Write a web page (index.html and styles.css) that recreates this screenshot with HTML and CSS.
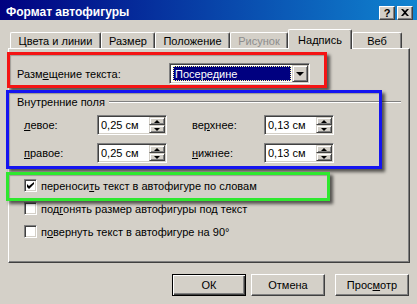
FILE: index.html
```html
<!DOCTYPE html>
<html lang="ru">
<head>
  <meta charset="UTF-8">
  <title>Формат автофигуры</title>
  <link rel="stylesheet" href="styles.css">
</head>
<body>
<div class="window">
  <div class="titlebar">
    <span class="title">Формат автофигуры</span>
    <div class="caption-btns">
      <span class="cbtn">?</span>
      <span class="cbtn">
        <svg width="8" height="7" viewBox="0 0 8 7"><path d="M0 0h2l2 2 2-2h2L5 3.5 8 7H6L4 5 2 7H0l3-3.5z" fill="#000"/></svg>
      </span>
    </div>
  </div>

  <div class="tabs">
    <div class="tab w1">Цвета и линии</div>
    <div class="tab w2">Размер</div>
    <div class="tab w3">Положение</div>
    <div class="tab w4 disabled">Рисунок</div>
    <div class="tab w5 active">Надпись</div>
    <div class="tab w6">Веб</div>
  </div>

  <div class="panel">
    <div class="place-row">
      <span class="place-label">Разм<u>е</u>щение текста:</span>
      <div class="combo">
        <div class="combo-value"><span>Посередине</span></div>
        <div class="combo-btn"><i class="arrow-down big"></i></div>
      </div>
    </div>

    <div class="group-head">
      <span>Внутренние поля</span>
      <div class="group-line"></div>
    </div>

    <div class="fields">
      <span class="f-label"><u>л</u>евое:</span>
      <div class="spin"><span class="spin-val">0,25 см</span><div class="spin-btns"><b><i class="arrow-up"></i></b><b><i class="arrow-down"></i></b></div></div>
      <span></span>
      <span class="f-label">ве<u>р</u>хнее:</span>
      <div class="spin"><span class="spin-val">0,13 см</span><div class="spin-btns"><b><i class="arrow-up"></i></b><b><i class="arrow-down"></i></b></div></div>

      <span class="f-label"><u>п</u>равое:</span>
      <div class="spin"><span class="spin-val">0,25 см</span><div class="spin-btns"><b><i class="arrow-up"></i></b><b><i class="arrow-down"></i></b></div></div>
      <span></span>
      <span class="f-label"><u>н</u>ижнее:</span>
      <div class="spin"><span class="spin-val">0,13 см</span><div class="spin-btns"><b><i class="arrow-up"></i></b><b><i class="arrow-down"></i></b></div></div>
    </div>

    <div class="checks">
      <div class="check-row">
        <span class="check-box">
          <svg width="7" height="7" viewBox="0 0 7 7"><path d="M0 2v3l2 2 5-5V-0L2 4z" fill="#000"/></svg>
        </span>
        <span>переноси<u>т</u>ь текст в автофигуре по словам</span>
      </div>
      <div class="check-row">
        <span class="check-box"></span>
        <span>под<u>г</u>онять размер автофигуры под текст</span>
      </div>
      <div class="check-row">
        <span class="check-box"></span>
        <span>п<u>о</u>вернуть текст в автофигуре на 90°</span>
      </div>
    </div>
  </div>

  <div class="buttons">
    <div class="btn default">ОК</div>
    <div class="btn cancel">Отмена</div>
    <div class="btn">Прос<u>м</u>отр</div>
  </div>

  <!-- цветные рамки поверх диалога -->
  <div class="mark red"></div>
  <div class="mark blue"></div>
  <div class="mark green"></div>
</div>
</body>
</html>
```

FILE: styles.css
```css
body {
  margin: 0;
  background: #d4d0c8;
}

.window {
  position: relative;
  width: 417px;
  height: 304px;
  background: #d4d0c8;
  color: #000;
  font-family: "Liberation Sans", Arial, sans-serif;
  font-size: 11px;
  overflow: hidden;
}

u {
  text-decoration: underline;
  text-underline-offset: 1px;
}

/* заголовок окна */
.titlebar {
  height: 20px;
  display: flex;
  align-items: center;
  justify-content: space-between;
  padding: 0 4px 0 6px;
  background: linear-gradient(to right, #000080, #1084d0);
  color: #fff;
}

.title {
  font-weight: bold;
  font-size: 12px;
  margin-top: 3px;
}

.caption-btns {
  display: flex;
  gap: 2px;
  margin-top: 5px;
}

.cbtn {
  width: 16px;
  height: 14px;
  box-sizing: border-box;
  display: flex;
  justify-content: center;
  align-items: center;
  background: #d4d0c8;
  color: #000;
  font-weight: bold;
  font-size: 11px;
  border-top: 1px solid #fff;
  border-left: 1px solid #fff;
  border-right: 1px solid #404040;
  border-bottom: 1px solid #404040;
  box-shadow: inset -1px -1px #808080;
}

/* вкладки */
.tabs {
  position: relative;
  z-index: 2;
  display: flex;
  align-items: flex-end;
  height: 28px;
  padding-left: 10px;
}

.tab {
  height: 16px;
  box-sizing: border-box;
  padding-top: 2px;
  text-align: center;
  line-height: 13px;
  border-top: 1px solid #fff;
  border-left: 1px solid #fff;
  border-right: 1px solid #404040;
  border-radius: 2px 2px 0 0;
  box-shadow: inset -1px 0 #808080;
  background: #d4d0c8;
}

.w1 { width: 91px; }
.w2 { width: 54px; }
.w3 { width: 75px; }
.w4 { width: 58px; }
.w5 { width: 64px; }
.w6 { width: 50px; }

.tab.disabled {
  color: #8d8d8d;
}

.tab.active {
  height: 20px;
  margin-bottom: -1px;
  padding-top: 4px;
}

/* панель */
.panel {
  margin-left: 8px;
  width: 402px;
  height: 215px;
  box-sizing: border-box;
  padding: 14px 0 0 8px;
  border-top: 1px solid #fff;
  border-left: 1px solid #fff;
  border-right: 1px solid #404040;
  border-bottom: 1px solid #404040;
  box-shadow: inset -1px -1px #808080;
}

.place-row {
  display: flex;
  align-items: center;
  height: 21px;
}

.place-label {
  width: 152px;
}

.combo {
  width: 141px;
  height: 21px;
  box-sizing: border-box;
  display: flex;
  align-items: center;
  padding: 1px;
  background: #fff;
  border-top: 1px solid #808080;
  border-left: 1px solid #808080;
  border-right: 1px solid #fff;
  border-bottom: 1px solid #fff;
  box-shadow: inset 1px 1px #404040, inset -1px -1px #d4d0c8;
}

.combo-value {
  flex: 1;
  height: 15px;
  margin: 0 1px 0 2px;
  display: flex;
  align-items: center;
  background: #000080;
  color: #fff;
  outline: 1px dotted #ffff9a;
  outline-offset: -1px;
  padding-left: 2px;
}

.combo-btn,
.spin-btns b {
  box-sizing: border-box;
  display: flex;
  justify-content: center;
  align-items: center;
  background: #d4d0c8;
  border-top: 1px solid #d4d0c8;
  border-left: 1px solid #d4d0c8;
  border-right: 1px solid #404040;
  border-bottom: 1px solid #404040;
  box-shadow: inset 1px 1px #fff, inset -1px -1px #808080;
}

.combo-btn {
  width: 16px;
  height: 17px;
}

.arrow-down,
.arrow-up {
  width: 0;
  height: 0;
  border-left: 3px solid transparent;
  border-right: 3px solid transparent;
}

.arrow-down { border-top: 3px solid #000; }
.arrow-up { border-bottom: 3px solid #000; }

.arrow-down.big {
  border-left-width: 4px;
  border-right-width: 4px;
  border-top-width: 4px;
}

/* внутренние поля */
.group-head {
  display: flex;
  align-items: center;
  height: 13px;
  margin-top: 11px;
  margin-right: 8px;
}

.group-line {
  flex: 1;
  margin-left: 4px;
  border-top: 1px solid #808080;
  border-bottom: 1px solid #fff;
}

.fields {
  display: grid;
  grid-template-columns: 73px 70px 25px 72px 70px;
  grid-auto-rows: 20px;
  row-gap: 8px;
  align-items: center;
  margin-top: 7px;
  padding-left: 7px;
}

.spin {
  height: 20px;
  box-sizing: border-box;
  display: flex;
  align-items: center;
  padding: 1px;
  background: #fff;
  border-top: 1px solid #808080;
  border-left: 1px solid #808080;
  border-right: 1px solid #fff;
  border-bottom: 1px solid #fff;
  box-shadow: inset 1px 1px #404040, inset -1px -1px #d4d0c8;
}

.spin-val {
  flex: 1;
  padding-left: 2px;
}

.spin-btns {
  display: flex;
  flex-direction: column;
  width: 16px;
  height: 16px;
}

.spin-btns b {
  flex: 1;
}

/* флажки */
.checks {
  display: flex;
  flex-direction: column;
  gap: 10px;
  margin-top: 16px;
  padding-left: 7px;
}

.check-row {
  display: flex;
  align-items: center;
  height: 13px;
}

.check-box {
  width: 13px;
  height: 13px;
  box-sizing: border-box;
  display: flex;
  justify-content: center;
  align-items: center;
  margin-right: 4px;
  background: #fff;
  border-top: 1px solid #808080;
  border-left: 1px solid #808080;
  border-right: 1px solid #fff;
  border-bottom: 1px solid #fff;
  box-shadow: inset 1px 1px #404040, inset -1px -1px #d4d0c8;
}

/* кнопки */
.buttons {
  display: flex;
  justify-content: flex-end;
  margin-top: 11px;
  padding-right: 8px;
}

.btn {
  width: 74px;
  height: 22px;
  box-sizing: border-box;
  display: flex;
  justify-content: center;
  align-items: center;
  border-top: 1px solid #fff;
  border-left: 1px solid #fff;
  border-right: 1px solid #404040;
  border-bottom: 1px solid #404040;
  box-shadow: inset -1px -1px #808080;
}

.btn.default {
  margin-right: 5px;
  border: 1px solid #000;
  box-shadow: inset 1px 1px #fff, inset -1px -1px #404040, inset -2px -2px #808080;
}

.btn.cancel {
  margin-right: 10px;
}

/* цветные выделения */
.mark {
  position: absolute;
  z-index: 5;
  box-sizing: border-box;
  border: 3px solid;
  box-shadow: 3px 3px 3px rgba(0, 0, 0, 0.6), inset 1px 1px 1px rgba(0, 0, 0, 0.25);
}

.mark.red {
  left: 7px;
  top: 52px;
  width: 320px;
  height: 36px;
  border-color: #f41414;
}

.mark.blue {
  left: 6px;
  top: 90px;
  width: 376px;
  height: 79px;
  border-color: #1414f0;
}

.mark.green {
  left: 6px;
  top: 172px;
  width: 324px;
  height: 29px;
  border-color: #2ee82e;
}
```
